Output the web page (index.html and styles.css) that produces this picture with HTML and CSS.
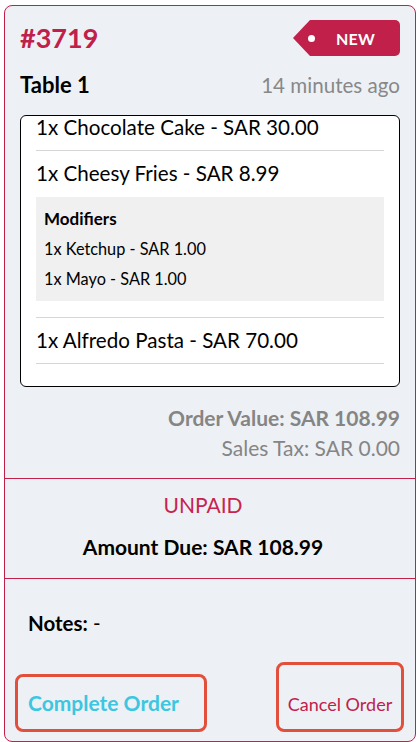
FILE: index.html
```html
<!DOCTYPE html>
<html>
<head>
<meta charset="utf-8">
<link rel="stylesheet" href="styles.css">
</head>
<body>
<div class="card">
  <div class="top">
    <div class="head-row">
      <div class="order-no">#3719</div>
      <div class="tag"><span class="tag-dot"></span><span class="tag-text">NEW</span></div>
    </div>
    <div class="table-row">
      <div class="table-name">Table 1</div>
      <div class="time-ago">14 minutes ago</div>
    </div>
    <div class="items-box">
      <div class="items-scroll">
        <div class="item">1x Chocolate Cake - SAR 30.00</div>
        <div class="item">
          <div>1x Cheesy Fries - SAR 8.99</div>
          <div class="modifiers">
            <div class="mod-title">Modifiers</div>
            <div class="mod-line">1x Ketchup - SAR 1.00</div>
            <div class="mod-line">1x Mayo - SAR 1.00</div>
          </div>
        </div>
        <div class="item">1x Alfredo Pasta - SAR 70.00</div>
      </div>
    </div>
    <div class="totals">
      <div class="order-value">Order Value: SAR 108.99</div>
      <div class="sales-tax">Sales Tax: SAR 0.00</div>
    </div>
  </div>
  <div class="payment">
    <div class="unpaid">UNPAID</div>
    <div class="amount-due">Amount Due: SAR 108.99</div>
  </div>
  <div class="bottom">
    <div class="notes"><b>Notes:</b> -</div>
    <div class="actions">
      <button class="btn btn-complete">Complete Order</button>
      <button class="btn btn-cancel">Cancel Order</button>
    </div>
  </div>
</div>
</body>
</html>
```
FILE: styles.css
```css
* { box-sizing: border-box; }
html, body { margin: 0; padding: 0; background: #ffffff; }
body {
  font-family: Lato, "Open Sans", Arial, sans-serif;
  color: #000;
  padding: 5px 1px 1px 4px;
}
.card {
  width: 412px;
  height: 737px;
  background: #edf1f5;
  border: 1px solid #c0204a;
  border-radius: 8px;
  display: flex;
  flex-direction: column;
  overflow: hidden;
}
.top { padding: 14px 15px 0 15px; height: 472px; }
.head-row {
  display: flex;
  justify-content: space-between;
  align-items: center;
  height: 36px;
}
.order-no {
  font-size: 27px;
  font-weight: 700;
  color: #c0204a;
  line-height: 36px;
}
.tag {
  width: 107px;
  height: 36px;
  background: #c0204a;
  border-radius: 0 5px 5px 0;
  clip-path: polygon(17px 0, 100% 0, 100% 100%, 17px 100%, 0 50%);
  display: flex;
  align-items: center;
  color: #fff;
}
.tag-dot {
  width: 7px;
  height: 7px;
  border-radius: 50%;
  background: #fff;
  margin-left: 15px;
}
.tag-text {
  font-size: 16px;
  font-weight: 700;
  margin-left: 21px;
  letter-spacing: 0.2px;
}
.table-row {
  display: flex;
  justify-content: space-between;
  align-items: baseline;
  margin-top: 15px;
  line-height: 28px;
}
.table-name { font-size: 22px; font-weight: 700; }
.time-ago { font-size: 20.6px; color: #888888; }
.items-box {
  margin-top: 16px;
  height: 272px;
  background: #fff;
  border: 1px solid #000;
  border-radius: 6px;
  overflow: hidden;
  padding: 0 15px;
}
.items-scroll { margin-top: -11px; }
.item {
  font-size: 20.6px;
  line-height: 24px;
  padding: 10px 0 11px;
  border-bottom: 1px solid #d6d6d6;
}
.modifiers {
  margin: 12px 0 5px;
  background: #f0f0f0;
  padding: 7px 8px 7px;
  font-size: 16.3px;
  line-height: 30px;
}
.mod-title { font-weight: 700; font-size: 17px; }
.totals {
  text-align: right;
  color: #858585;
  margin-top: 16px;
  line-height: 30px;
}
.order-value { font-size: 21px; font-weight: 700; }
.sales-tax { font-size: 21px; }
.payment {
  border-top: 1px solid #c0204a;
  border-bottom: 1px solid #c0204a;
  height: 101px;
  text-align: center;
  padding-right: 14px;
  padding-top: 13px;
}
.unpaid { font-size: 21px; color: #c8234f; line-height: 26px; }
.amount-due { font-size: 21px; font-weight: 700; margin-top: 16px; line-height: 26px; }
.bottom {
  flex: 1;
  display: flex;
  flex-direction: column;
  padding: 0 11px 9px 10px;
}
.notes {
  font-size: 20.5px;
  margin-top: 31px;
  margin-left: 13px;
  line-height: 26px;
}
.notes b { font-weight: 700; }
.actions {
  margin-top: auto;
  display: flex;
  justify-content: space-between;
  align-items: flex-end;
}
.btn {
  font-family: Lato, "Open Sans", Arial, sans-serif;
  background: transparent;
  border: 3px solid #e24f3b;
  border-radius: 8px;
  line-height: 22px;
}
.btn-complete {
  width: 192px;
  height: 58px;
  font-size: 21px;
  font-weight: 700;
  color: #3cc6e0;
  text-align: left;
  padding: 0 0 0 10px;
}
.btn-cancel {
  width: 128px;
  height: 70px;
  font-size: 18px;
  color: #c0204a;
  text-align: center;
  padding: 14px 0 0 0;
}
```
